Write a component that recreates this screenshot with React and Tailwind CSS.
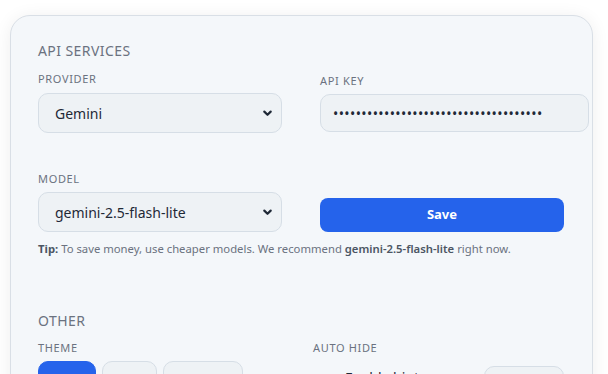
import { useState } from "react";

const font = { fontFamily: '"Noto Sans", "Open Sans", Arial, sans-serif' };

function Chevron() {
  return (
    <svg
      className="pointer-events-none absolute right-[9px] top-1/2 h-[11px] w-[11px] -translate-y-1/2 text-[#1f2937]"
      viewBox="0 0 12 12"
      fill="none"
      stroke="currentColor"
      strokeWidth={2.4}
      strokeLinecap="round"
      strokeLinejoin="round"
    >
      <path d="M2.5 4.5 6 8l3.5-3.5" />
    </svg>
  );
}

function Label({ children, className = "" }) {
  return (
    <div
      className={`text-[11px] leading-4 tracking-[0.06em] uppercase text-[#6b7280] ${className}`}
    >
      {children}
    </div>
  );
}

function Select({ value, options, onChange }) {
  return (
    <div className="relative mt-[6px]">
      <select
        value={value}
        onChange={(e) => onChange(e.target.value)}
        className="h-10 w-full appearance-none rounded-[10px] border border-[#d6dee6] bg-[#eef2f5] pl-4 pr-8 text-[14px] text-[#1f2937] outline-none"
      >
        {options.map((o) => (
          <option key={o}>{o}</option>
        ))}
      </select>
      <Chevron />
    </div>
  );
}

export default function App() {
  const [provider, setProvider] = useState("Gemini");
  const [model, setModel] = useState("gemini-2.5-flash-lite");
  const [theme, setTheme] = useState("Light");

  return (
    <div className="min-h-screen bg-white pt-[15px] pl-[10px]" style={font}>
      <div className="w-[583px] rounded-[20px] border border-[#d9dfe6] bg-[#f4f7fa] px-[27px] pt-[25px] pb-10 shadow-[0_2px_18px_rgba(0,0,0,0.07)]">
        {/* API services */}
        <h2 className="text-[14px] leading-5 tracking-[0.03em] text-[#6b7280]">
          API SERVICES
        </h2>

        <div className="mt-[10px] grid grid-cols-[244px_244px] gap-x-[38px] gap-y-[38px]">
          <div>
            <Label>Provider</Label>
            <Select
              value={provider}
              options={["Gemini", "OpenAI", "Anthropic"]}
              onChange={setProvider}
            />
          </div>
          <div className="pt-[2px]">
            <Label>API Key</Label>
            <input
              type="password"
              readOnly
              defaultValue="sk-0000000000000000000000000000000000"
              className="mt-[5px] h-[38px] w-[269px] rounded-[10px] border border-[#d6dee6] bg-[#eef2f5] px-3 text-[14px] tracking-[0.4px] text-[#1f2937] outline-none"
            />
          </div>
          <div>
            <Label>Model</Label>
            <div className="-mt-px">
              <Select
                value={model}
                options={["gemini-2.5-flash-lite", "gemini-2.5-flash", "gemini-2.5-pro"]}
                onChange={setModel}
              />
            </div>
          </div>
          <div className="flex items-end">
            <button className="h-[34px] w-full rounded-lg bg-[#2563eb] text-[13px] font-bold text-white">
              Save
            </button>
          </div>
        </div>

        <p className="mt-[9px] text-[11.3px] leading-4 text-[#6b7280]">
          <span className="font-bold text-[#4b5563]">Tip:</span> To save money,
          use cheaper models. We recommend{" "}
          <span className="font-semibold text-[#4b5563]">gemini-2.5-flash-lite</span>{" "}
          right now.
        </p>

        {/* Other */}
        <h2 className="mt-[54px] text-[14px] leading-5 tracking-[0.03em] text-[#6b7280]">
          OTHER
        </h2>

        <div className="mt-[9px] grid grid-cols-[251px_251px] gap-x-6">
          <div>
            <Label>Theme</Label>
            <div className="mt-[5px] flex gap-[6px]">
              {[
                ["Light", "w-[58px]"],
                ["Dark", "w-[55px]"],
                ["System", "w-[80px]"],
              ].map(([t, w]) => (
                <button
                  key={t}
                  onClick={() => setTheme(t)}
                  className={`h-[46px] ${w} rounded-[10px] border text-[13px] ${
                    theme === t
                      ? "border-[#2563eb] bg-[#2563eb] font-semibold text-white"
                      : "border-[#d6dee6] bg-[#eef2f5] text-[#1f2937]"
                  }`}
                >
                  {t}
                </button>
              ))}
            </div>
          </div>
          <div>
            <Label>Auto Hide</Label>
            <div className="mt-[10px] flex items-start justify-between">
              <span className="pl-8 pt-[2px] text-[14px] leading-5 text-[#1f2937]">
                Enable hint
              </span>
              <div className="h-8 w-[80px] rounded-[10px] border border-[#d6dee6] bg-[#eef2f5]" />
            </div>
          </div>
        </div>
      </div>
    </div>
  );
}
